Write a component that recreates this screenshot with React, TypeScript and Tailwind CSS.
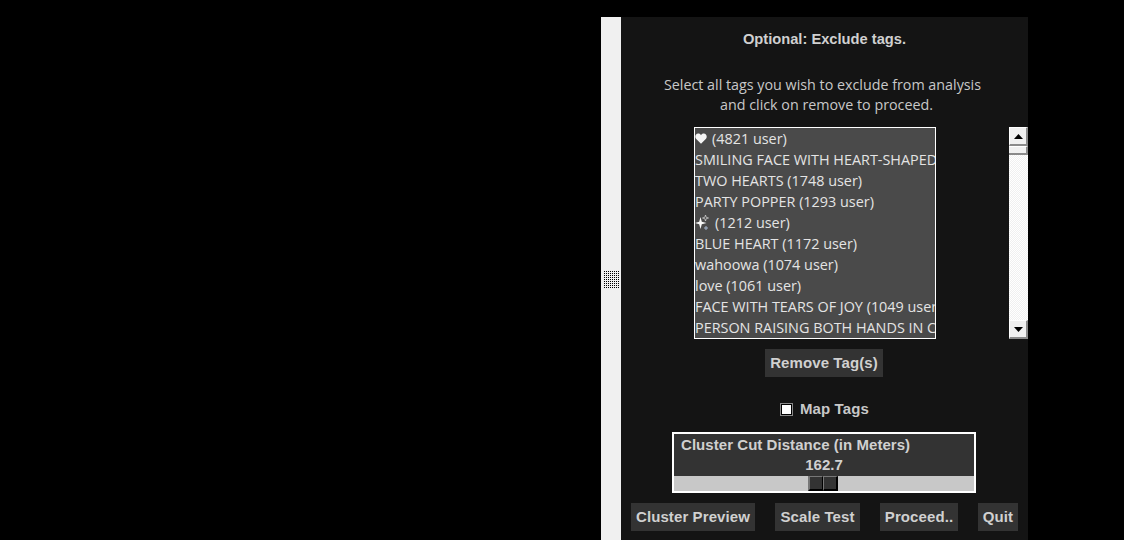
const sans = "font-['Liberation_Sans',Arial,sans-serif]";
const body = "font-['Open_Sans','Noto_Sans',sans-serif]";

const tags = [
  "(4821 user)",
  "SMILING FACE WITH HEART-SHAPED EYES (1893 user)",
  "TWO HEARTS (1748 user)",
  "PARTY POPPER (1293 user)",
  "(1212 user)",
  "BLUE HEART (1172 user)",
  "wahoowa (1074 user)",
  "love (1061 user)",
  "FACE WITH TEARS OF JOY (1049 user)",
  "PERSON RAISING BOTH HANDS IN CELEBRATION (1012 user)",
];

function Heart() {
  return (
    <svg width="12" height="11" viewBox="0 0 12 11" className="shrink-0 mr-[5px]">
      <path d="M6 10.800 1 5.800C-.6 3.800.6.6 3.200.6 4.500.6 5.500 1.300 6 2.200 6.500 1.300 7.500.6 8.800.6c2.600 0 3.800 3.200 2.200 5.200z" fill="#f4f4f4" />
    </svg>
  );
}

function Sparkles() {
  return (
    <svg width="15" height="15" viewBox="0 0 15 15" className="shrink-0 mr-[5px]">
      <path d="M5.500 2 6.800 6.700 11.500 8 6.800 9.300 5.500 14 4.200 9.300 0 8 4.200 6.700z" fill="#f8f8f8" />
      <path d="M10.500 0 11.200 2.300 13.500 3 11.200 3.700 10.500 6 9.800 3.700 7.500 3 9.800 2.300z" fill="none" stroke="#d8d8d8" strokeWidth="0.7" />
      <path d="M11 11v4M9 13h4" stroke="#a8b8d0" strokeWidth="1" fill="none" />
    </svg>
  );
}

function Btn({ label, w }: { label: string; w: string }) {
  return (
    <button className={`${sans} ${w} h-7 shrink-0 bg-[#333333] text-[#d0d0d0] text-[15px] font-bold tracking-[0.1px] whitespace-nowrap flex items-center justify-center`}>
      {label}
    </button>
  );
}

function ScrollArrow({ up }: { up?: boolean }) {
  return (
    <div className="h-[19px] bg-[#f0f0f0] border-t border-l border-t-white border-l-white border-r-2 border-b-2 border-r-[#8a8a8a] border-b-[#8a8a8a] flex items-center justify-center">
      <svg width="9" height="5" viewBox="0 0 9 5">
        <path d={up ? "M4.500 0 9 5H0z" : "M0 0h9L4.500 5z"} fill="#000" />
      </svg>
    </div>
  );
}

export default function App() {
  return (
    <div className="w-[1124px] h-[540px] bg-black overflow-hidden flex pl-[601px] pt-[17px]">
      {/* sash */}
      <div className="w-5 bg-[#f0f0f0] flex items-center pl-[3px]">
        <svg width="15" height="17" viewBox="0 0 15 17" className="mt-[2px]">
          <defs>
            <pattern id="grip" width="2" height="2" patternUnits="userSpaceOnUse">
              <rect width="1" height="1" fill="#000" />
            </pattern>
          </defs>
          <rect width="15" height="17" fill="url(#grip)" />
        </svg>
      </div>

      {/* right panel */}
      <div className="w-[407px] bg-[#141414] flex flex-col">
        <div className={`${sans} mt-[14px] h-4 leading-4 text-center text-[14.7px] font-bold text-[#d0d0d0]`}>
          Optional: Exclude tags.
        </div>
        <div className={`${body} mt-[28px] text-center text-[14.3px] leading-5 text-[#c8c8c8]`}>
          <div className="pr-[4px]">Select all tags you wish to exclude from analysis</div>
          <div className="pl-[4px]">and click on remove to proceed.</div>
        </div>

        {/* list + scrollbar */}
        <div className="mt-[12px] flex pl-[73px]">
          <div className={`${body} w-[242px] h-[212px] border border-white bg-[#4a4a4a] overflow-hidden text-[14.4px] text-[#e4e4e4]`}>
            {tags.map((t, i) => (
              <div key={i} className="h-[21px] leading-[21px] whitespace-nowrap flex items-center">
                {i === 0 && <Heart />}
                {i === 4 && <Sparkles />}
                {t}
              </div>
            ))}
          </div>
          <div className="ml-[73px] w-[19px] h-[212px] bg-[repeating-conic-gradient(#f0f0f0_0_25%,#ffffff_0_50%)] bg-[length:2px_2px] flex flex-col">
            <ScrollArrow up />
            <div className="h-[9px] bg-[#f0f0f0] border-t border-t-white border-b-2 border-b-[#8a8a8a] border-r-2 border-r-[#8a8a8a]" />
            <div className="flex-1" />
            <ScrollArrow />
          </div>
        </div>

        <div className="mt-[10px] flex pl-[144px]">
          <Btn label="Remove Tag(s)" w="w-[118px]" />
        </div>

        <div className="mt-[26px] flex items-center pl-[159px] h-[13px]">
          <div className="w-[13px] h-[13px] bg-black border border-[#888888] p-[1px]">
            <div className="w-full h-full bg-white" />
          </div>
          <span className={`${sans} ml-[7px] text-[15px] font-bold tracking-[0.1px] text-[#c8c8c8]`}>Map Tags</span>
        </div>

        {/* cluster scale */}
        <div className="mt-4 ml-[51px] w-[304px] h-[61px] border-2 border-white bg-[#333333] flex flex-col">
          <div className={`${sans} pl-[7px] pt-[1px] h-[21px] leading-5 text-[15px] font-bold tracking-[0.05px] text-[#d0d0d0]`}>
            Cluster Cut Distance (in Meters)
          </div>
          <div className={`${sans} h-[21px] leading-5 text-center text-[15px] font-bold text-[#d0d0d0]`}>162.7</div>
          <div className="flex-1 bg-[#c8c8c8] flex pl-[134px]">
            <div className="w-[15px] h-full bg-[#333333] border-l-2 border-t border-l-[#777777] border-t-[#777777] border-r border-r-black border-b-2 border-b-black" />
            <div className="w-[15px] h-full bg-[#333333] border-l border-t border-l-[#777777] border-t-[#777777] border-r-2 border-r-black border-b-2 border-b-black" />
          </div>
        </div>

        {/* bottom buttons */}
        <div className="mt-[10px] flex pl-[10px] gap-5">
          <Btn label="Cluster Preview" w="w-[124px]" />
          <Btn label="Scale Test" w="w-[85px]" />
          <Btn label="Proceed.." w="w-[78px]" />
          <Btn label="Quit" w="w-[40px]" />
        </div>
      </div>
    </div>
  );
}
